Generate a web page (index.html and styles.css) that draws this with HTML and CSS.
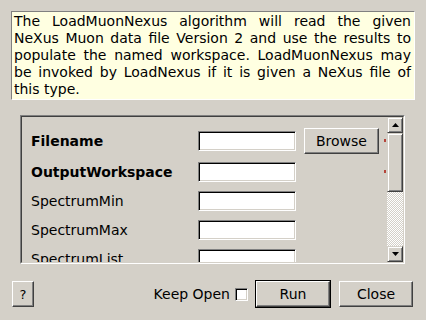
FILE: index.html
```html
<!DOCTYPE html>
<html>
<head>
<meta charset="utf-8">
<link rel="stylesheet" href="styles.css">
</head>
<body>
<div class="dialog">
  <div class="desc">The LoadMuonNexus algorithm will read the given NeXus Muon data file Version 2 and use the results to populate the named workspace. LoadMuonNexus may be invoked by LoadNexus if it is given a NeXus file of this type.</div>

  <div class="frame">
    <div class="frame-inner">
      <div class="viewport">
        <div class="row row-first">
          <span class="label bold">Filename</span>
          <span class="input"></span>
          <span class="btn browse">Browse</span>
          <span class="req"></span>
        </div>
        <div class="row">
          <span class="label bold">OutputWorkspace</span>
          <span class="input"></span>
          <span class="spacer"></span>
          <span class="req"></span>
        </div>
        <div class="row">
          <span class="label">SpectrumMin</span>
          <span class="input"></span>
        </div>
        <div class="row">
          <span class="label">SpectrumMax</span>
          <span class="input"></span>
        </div>
        <div class="row">
          <span class="label">SpectrumList</span>
          <span class="input"></span>
        </div>
      </div>
      <div class="scrollbar">
        <div class="sb-btn"><svg width="7" height="4" viewBox="0 0 7 4"><polygon points="3.5,0 7,4 0,4" fill="#000"/></svg></div>
        <div class="sb-thumb"></div>
        <div class="sb-track"></div>
        <div class="sb-btn"><svg width="7" height="4" viewBox="0 0 7 4"><polygon points="0,0 7,0 3.5,4" fill="#000"/></svg></div>
      </div>
    </div>
  </div>

  <div class="footer">
    <span class="btn help">?</span>
    <span class="keep">Keep Open</span>
    <span class="check"></span>
    <span class="default"><span class="btn run">Run</span></span>
    <span class="btn close">Close</span>
  </div>
</div>
</body>
</html>
```

FILE: styles.css
```css
html, body {
  margin: 0;
  padding: 0;
  background: #d4d0c8;
}
body {
  width: 426px;
  height: 320px;
  overflow: hidden;
  font-family: "DejaVu Sans", sans-serif;
  color: #000;
}
.dialog {
  display: flex;
  flex-direction: column;
}
.desc {
  margin: 11px 11px 0 11px;
  height: 87px;
  background: #ffffe1;
  border: 1px solid;
  border-color: #808080 #ffffff #ffffff #808080;
  padding: 1px 3px 0 2px;
  box-sizing: content-box;
  height: 86px;
  font-size: 14px;
  line-height: 17px;
  text-align: justify;
}
.frame {
  margin: 15px 0 0 20px;
  width: 383px;
  height: 147px;
  border: 1px solid;
  border-color: #808080 #ffffff #ffffff #808080;
}
.frame-inner {
  height: 145px;
  border: 1px solid;
  border-color: #404040 #d4d0c8 #d4d0c8 #404040;
  display: flex;
  overflow: hidden;
}
.viewport {
  flex: 1;
  padding: 7px 0 0 9px;
  display: flex;
  flex-direction: column;
  font-size: 14px;
}
.row {
  height: 29px;
  display: flex;
  align-items: center;
  flex-shrink: 0;
}
.row-first {
  height: 33px;
}
.label {
  width: 167px;
}
.bold {
  font-weight: bold;
}
.input {
  width: 96px;
  height: 18px;
  background: #fff;
  border: 1px solid;
  border-color: #808080 #ffffff #ffffff #808080;
  box-shadow: inset 1px 1px 0 #000, inset -1px -1px 0 #d4d0c8;
}
.btn {
  display: flex;
  align-items: center;
  justify-content: center;
  box-sizing: border-box;
  border: 1px solid;
  border-color: #ffffff #404040 #404040 #ffffff;
  box-shadow: inset -1px -1px 0 #808080;
  font-size: 14px;
}
.browse {
  margin-left: 8px;
  width: 75px;
  height: 26px;
}
.spacer {
  width: 83px;
}
.req {
  width: 2px;
  height: 3px;
  background: #b5443a;
  margin-left: 5px;
}
.scrollbar {
  width: 16px;
  display: flex;
  flex-direction: column;
}
.sb-btn {
  height: 16px;
  box-sizing: border-box;
  border: 1px solid;
  border-color: #d4d0c8 #404040 #404040 #d4d0c8;
  box-shadow: inset 1px 1px 0 #fff, inset -1px -1px 0 #808080;
  background: #d4d0c8;
  display: flex;
  align-items: center;
  justify-content: center;
}
.sb-thumb {
  height: 59px;
  box-sizing: border-box;
  border: 1px solid;
  border-color: #d4d0c8 #404040 #404040 #d4d0c8;
  box-shadow: inset 1px 1px 0 #fff, inset -1px -1px 0 #808080;
  background: #d4d0c8;
}
.sb-track {
  flex: 1;
  background: repeating-conic-gradient(#ffffff 0 25%, #d4d0c8 0 50%) 0 0 / 2px 2px;
}
.footer {
  margin-top: 16px;
  height: 28px;
  display: flex;
  align-items: center;
  padding: 0 13px 0 12px;
}
.help {
  width: 22px;
  height: 26px;
  font-size: 13px;
}
.keep {
  margin-left: auto;
  font-size: 14px;
}
.check {
  width: 13px;
  height: 13px;
  box-sizing: border-box;
  margin-left: 5px;
  background: #fff;
  border: 1px solid;
  border-color: #808080 #ffffff #ffffff #808080;
  box-shadow: inset 1px 1px 0 #000, inset -1px -1px 0 #d4d0c8;
}
.default {
  margin-left: 7px;
  border: 1px solid #000;
  display: flex;
}
.run {
  width: 74px;
  height: 26px;
}
.close {
  margin-left: 8px;
  width: 74px;
  height: 26px;
}
```
